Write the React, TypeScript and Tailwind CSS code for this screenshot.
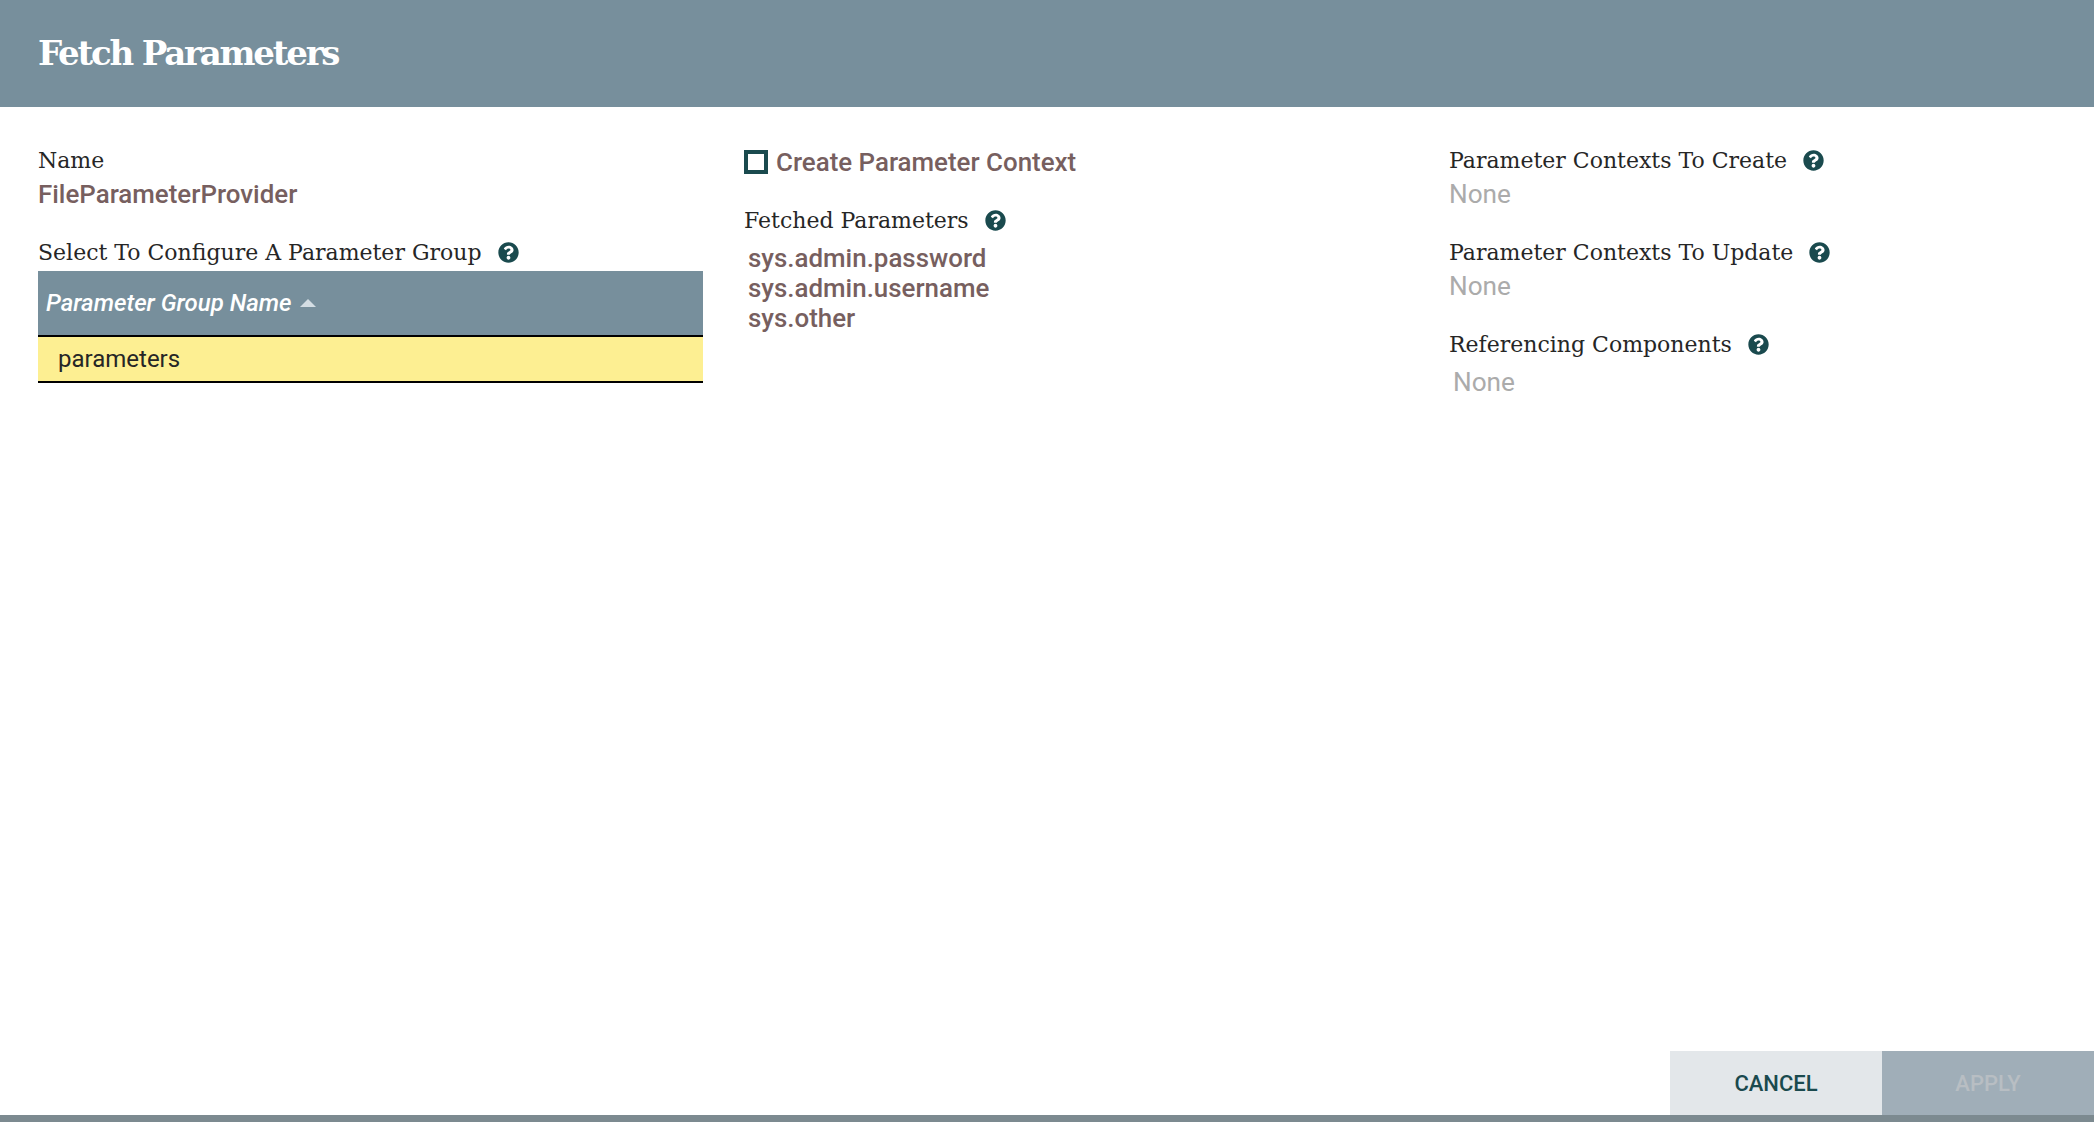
import React from 'react';
import { FaQuestionCircle } from 'react-icons/fa';

function Label({ text, help = false }: { text: string, help?: boolean }) {
  return (
    <div className="flex items-center h-[26px] text-[22px] text-[#262626] font-['DejaVu_Serif',serif]">
      <span>{text}</span>
      {help && <FaQuestionCircle className="ml-4 w-[21px] h-[21px] text-[#1a4a4e]" />}
    </div>
  );
}

function Value({ text, muted = false, className = '' }: { text: string, muted?: boolean, className?: string }) {
  return (
    <div className={`leading-[30px] ${muted ? 'text-[26.2px] text-[#ababab]' : 'text-[25.9px] font-medium text-[#775f5f]'} ${className}`}>
      {text}
    </div>
  );
}

export default function App() {
  return (
    <div className="h-[1122px] w-full flex flex-col bg-white overflow-hidden font-['Roboto',sans-serif]">
      {/* Header */}
      <div className="h-[107px] shrink-0 bg-[#778f9c] flex items-center px-[38px]">
        <h1 className="text-[34px] font-bold text-white font-['DejaVu_Serif',serif] tracking-[-2.2px]">Fetch Parameters</h1>
      </div>

      {/* Body */}
      <div className="flex-1 grid grid-cols-[706px_705px_1fr] pl-[38px] pt-[40px]">
        <div className="flex flex-col pr-[41px]">
          <Label text="Name" />
          <Value text="FileParameterProvider" className="mt-[6px]" />
          <div className="mt-[30px]"><Label text="Select To Configure A Parameter Group" help /></div>
          <div className="mt-[6px]">
            <div className="h-[66px] bg-[#778f9c] border-b-2 border-black flex items-center px-2 text-white italic font-medium text-[24px]">
              <span>Parameter Group Name</span>
              <svg className="ml-2 w-[16px] h-[8px]" viewBox="0 0 16 8"><path d="M8 0 L16 8 H0 Z" fill="#d4dde3" /></svg>
            </div>
            <div className="h-[46px] bg-[#fdef92] border-b-2 border-black flex items-center pl-[20px] text-[24px] text-[#262626]">
              parameters
            </div>
          </div>
        </div>

        <div className="flex flex-col">
          <div className="flex items-center h-[30px]">
            <span className="w-6 h-6 border-[4px] border-[#1a4a4e] bg-white" />
            <span className="ml-2 pt-px text-[25.9px] font-medium text-[#775f5f]">Create Parameter Context</span>
          </div>
          <div className="mt-[30px]"><Label text="Fetched Parameters" help /></div>
          <div className="mt-[10px] pl-1">
            <Value text="sys.admin.password" />
            <Value text="sys.admin.username" />
            <Value text="sys.other" />
          </div>
        </div>

        <div className="flex flex-col">
          <Label text="Parameter Contexts To Create" help />
          <Value text="None" muted className="mt-[6px]" />
          <div className="mt-[30px]"><Label text="Parameter Contexts To Update" help /></div>
          <Value text="None" muted className="mt-[6px]" />
          <div className="mt-[30px]"><Label text="Referencing Components" help /></div>
          <Value text="None" muted className="mt-[10px] pl-1" />
        </div>
      </div>

      {/* Footer */}
      <div className="flex justify-end shrink-0">
        <button className="w-[212px] h-[64px] bg-[#e3e7ea] text-[#1a4a4e] font-medium text-[22px] pt-px">CANCEL</button>
        <button className="w-[212px] h-[64px] bg-[#a0aeb8] text-[#b8bec3] font-medium text-[22px] pt-px">APPLY</button>
      </div>
      <div className="h-[7px] shrink-0 bg-[#7c8a90]" />
    </div>
  );
}
